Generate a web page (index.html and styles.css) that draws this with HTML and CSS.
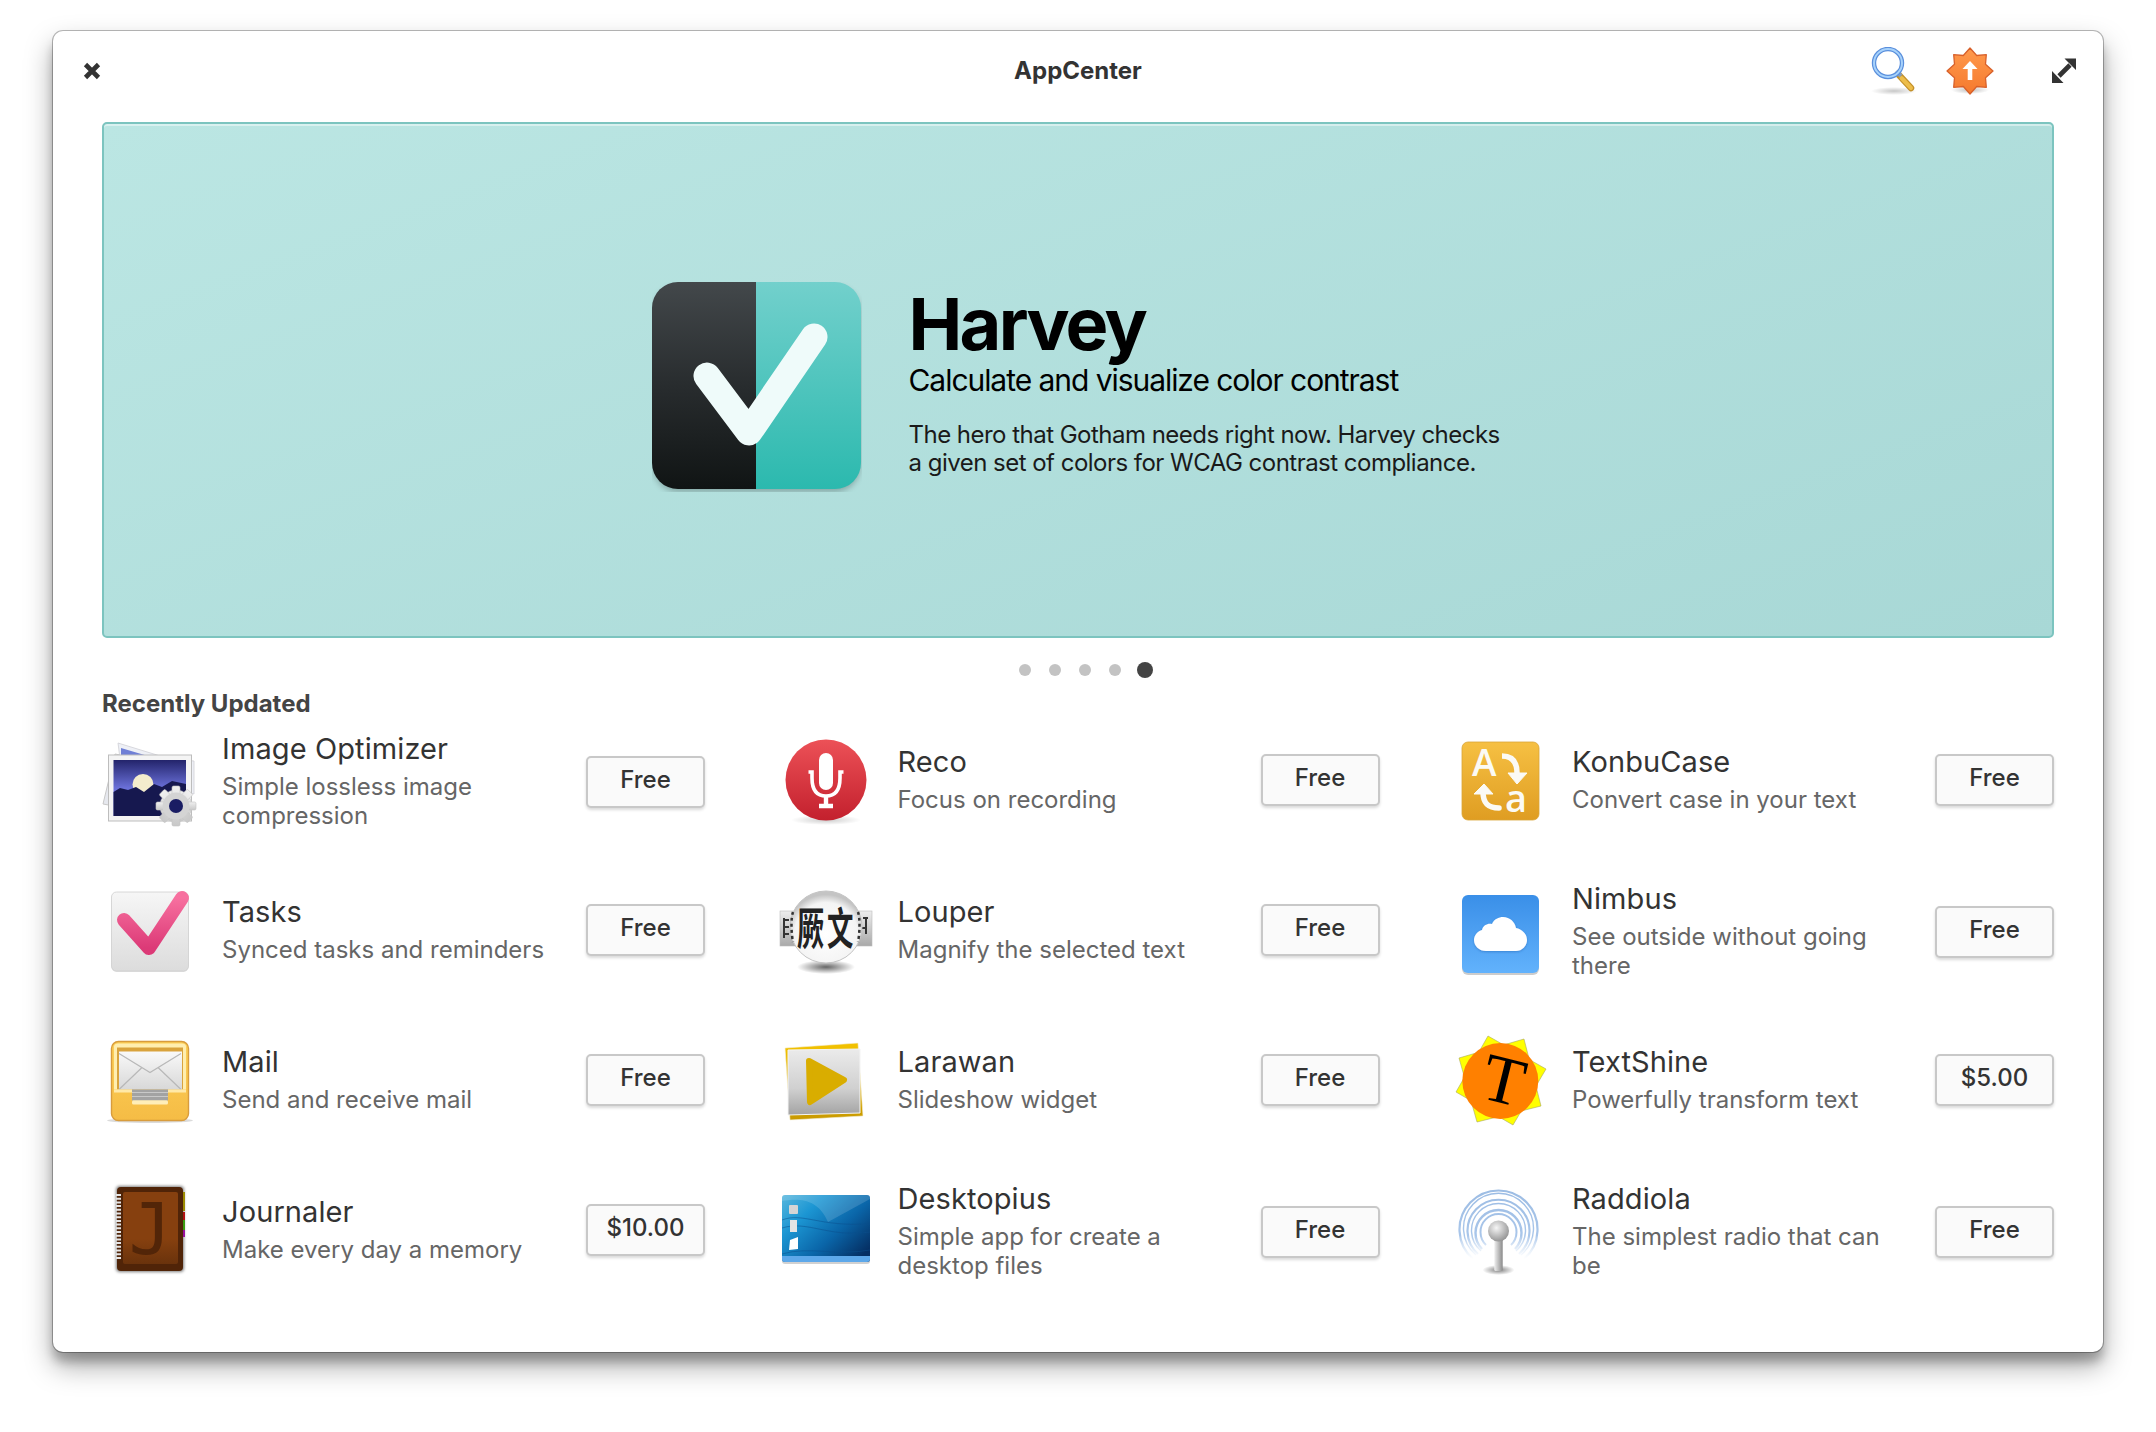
FILE: index.html
```html
<!DOCTYPE html>
<html lang="en">
<head>
<meta charset="utf-8">
<title>AppCenter</title>
<link rel="stylesheet" href="styles.css">
</head>
<body>
<main class="window">
  <header class="titlebar">
    <div class="tb-left">
      <svg class="ic-close" width="18" height="18" viewBox="0 0 18 18"><path d="M2.500 2.500L15.500 15.500M15.500 2.500L2.500 15.500" stroke="#333" stroke-width="4.600" fill="none"/></svg>
    </div>
    <h1 class="title">AppCenter</h1>
    <div class="tb-right">
      <svg class="ic-search" width="48" height="48" viewBox="0 0 48 48">
        <defs><radialGradient id="ss"><stop offset="0" stop-color="#000" stop-opacity=".22"/><stop offset="1" stop-color="#000" stop-opacity="0"/></radialGradient></defs>
        <ellipse cx="24" cy="44" rx="23" ry="4" fill="url(#ss)"/>
        <path d="M28 27L41 41" stroke="#c4912a" stroke-width="6.500" stroke-linecap="round"/>
        <path d="M31.500 31L41 41" stroke="#edbd4a" stroke-width="4" stroke-linecap="round"/>
        <path d="M26 24L31 29" stroke="#8a9db5" stroke-width="4"/>
        <circle cx="18" cy="16" r="14" fill="#fff" fill-opacity=".5" stroke="#5a8fdc" stroke-width="4.400"/>
        <circle cx="18" cy="16" r="14" fill="none" stroke="#a7d2fb" stroke-width="2"/>
      </svg>
      <svg class="ic-update" width="48" height="48" viewBox="0 0 48 48">
        <defs><linearGradient id="ug" x1="0" y1="0" x2="0" y2="1"><stop offset="0" stop-color="#ff9a4d"/><stop offset="1" stop-color="#f5792e"/></linearGradient>
        <radialGradient id="us"><stop offset="0" stop-color="#000" stop-opacity=".25"/><stop offset="1" stop-color="#000" stop-opacity="0"/></radialGradient></defs>
        <ellipse cx="24" cy="43" rx="19" ry="4" fill="url(#us)"/>
        <path d="M24 1L30.700 8.500L40.300 7.700L39.500 17.300L47 24L39.500 30.700L40.300 40.300L30.700 39.500L24 47L17.300 39.500L7.700 40.300L8.500 30.700L1 24L8.500 17.300L7.700 7.700L17.300 8.500Z" fill="url(#ug)" stroke="#d8602a" stroke-width="1.300" stroke-linejoin="round"/>
        <path d="M24 14L31.500 22H26.300V33H21.700V22H16.500Z" fill="#fff"/>
      </svg>
      <svg class="ic-expand" width="24" height="25" viewBox="0 0 24 25">
        <path d="M7 18L18 7" stroke="#333" stroke-width="4.600"/>
        <path d="M12.500 0.500H24V12Z M0 13V25H11.500Z" fill="#333"/>
      </svg>
    </div>
  </header>

  <section class="hero">
    <svg class="hero-icon" width="210" height="210" viewBox="0 0 210 210">
      <defs>
        <linearGradient id="hd" x1="0" y1="0" x2="0" y2="1"><stop offset="0" stop-color="#43484b"/><stop offset=".5" stop-color="#282c2e"/><stop offset="1" stop-color="#101414"/></linearGradient>
        <linearGradient id="ht" x1="0" y1="0" x2="0" y2="1"><stop offset="0" stop-color="#72d0cc"/><stop offset="1" stop-color="#2bb9ae"/></linearGradient>
        <clipPath id="hc"><rect x="0" y="0" width="209" height="207" rx="26"/></clipPath>
        <filter id="hb" x="-20%" y="-20%" width="140%" height="140%"><feGaussianBlur stdDeviation="3"/></filter>
      </defs>
      <rect x="1" y="4" width="207" height="206" rx="26" fill="#000" opacity=".25" filter="url(#hb)"/>
      <g clip-path="url(#hc)">
        <rect x="0" y="0" width="104" height="208" fill="url(#hd)"/>
        <rect x="104" y="0" width="106" height="208" fill="url(#ht)"/>
      </g>
      <path d="M55 94L97 150L162 55" fill="none" stroke="#effbfa" stroke-width="27" stroke-linecap="round" stroke-linejoin="round"/>
    </svg>
    <div class="hero-text">
      <h2 class="hero-name">Harvey</h2>
      <p class="hero-sub">Calculate and visualize color contrast</p>
      <p class="hero-desc">The hero that Gotham needs right now. Harvey checks a given set of colors for WCAG contrast compliance.</p>
    </div>
  </section>

  <div class="dots"><span class="dot"></span><span class="dot"></span><span class="dot"></span><span class="dot"></span><span class="dot dot-on"></span></div>

  <h3 class="section-title">Recently Updated</h3>

  <div class="grid">
    <article class="app">
      <svg class="icon" viewBox="0 0 96 96">
        <defs>
          <linearGradient id="io" x1="0" y1="0" x2="0" y2="1"><stop offset="0" stop-color="#23246b"/><stop offset=".5" stop-color="#6a70d8"/><stop offset="1" stop-color="#8186e0"/></linearGradient>
          <linearGradient id="iog" x1="0" y1="0" x2="0" y2="1"><stop offset="0" stop-color="#f0f0f0"/><stop offset="1" stop-color="#c8c8c8"/></linearGradient>
        </defs>
        <path d="M1 70L13 20L88 34L78 84Z" fill="#e6e8ee" stroke="#c8c8c8"/>
        <path d="M16 9L68 25L92 27L92 60L20 40Z" fill="#eef0f6" stroke="#cfcfd6" stroke-width=".8"/>
        <path d="M19 14L56 25H19Z" fill="#6f7fd6"/>
        <rect x="6.500" y="21" width="83" height="66" fill="#f4f4f4" stroke="#bdbdbd"/>
        <rect x="11.500" y="26" width="72.500" height="56" fill="url(#io)"/>
        <circle cx="41" cy="50.500" r="10.500" fill="#f4eccd"/>
        <path d="M11.500 58L18 54L26 56L34 53L42 58L52 50L60 53L70 47L84 50V82H11.500Z" fill="#16184f"/>
        <g fill="url(#iog)" stroke="#c4c4c4" stroke-width=".6">
          <circle cx="74" cy="72" r="16"/>
          <rect x="70" y="52" width="8" height="40" rx="1.500"/>
          <rect x="54" y="68" width="40" height="8" rx="1.500"/>
          <rect x="70" y="52" width="8" height="40" rx="1.500" transform="rotate(45 74 72)"/>
          <rect x="70" y="52" width="8" height="40" rx="1.500" transform="rotate(-45 74 72)"/>
        </g>
        <circle cx="74" cy="72" r="13.500" fill="#d4d4d4"/>
        <circle cx="74" cy="72" r="7" fill="#1a1d63"/>
      </svg>
      <div class="info"><h4 class="name">Image Optimizer</h4><p class="summary">Simple lossless image compression</p></div>
      <button class="price">Free</button>
    </article>

    <article class="app">
      <svg class="icon" viewBox="0 0 96 96">
        <defs>
          <linearGradient id="re" x1="0" y1="0" x2="0" y2="1"><stop offset="0" stop-color="#ec5157"/><stop offset="1" stop-color="#c3202d"/></linearGradient>
          <radialGradient id="res"><stop offset="0" stop-color="#000" stop-opacity=".2"/><stop offset="1" stop-color="#000" stop-opacity="0"/></radialGradient>
        </defs>
        <ellipse cx="48" cy="88" rx="35" ry="5" fill="url(#res)"/>
        <circle cx="48" cy="48" r="40.500" fill="url(#re)"/>
        <rect x="41" y="21" width="14" height="37" rx="7" fill="#fff"/>
        <path d="M30.500 40H34V46C34 61 41 64 48 64C55 64 62 61 62 46V40H65.500" fill="none" stroke="#fff" stroke-width="3.600"/>
        <path d="M48 63V73M41 74H55" stroke="#fff" stroke-width="4.400" fill="none"/>
      </svg>
      <div class="info"><h4 class="name">Reco</h4><p class="summary">Focus on recording</p></div>
      <button class="price">Free</button>
    </article>

    <article class="app">
      <svg class="icon" viewBox="0 0 96 96">
        <defs><linearGradient id="ko" x1="0" y1="0" x2="0" y2="1"><stop offset="0" stop-color="#f6c043"/><stop offset="1" stop-color="#df9d22"/></linearGradient></defs>
        <rect x="10" y="10" width="77" height="78" rx="6" fill="url(#ko)" stroke="#d9a437" stroke-width=".8"/>
        <text x="20" y="44" class="ic-letter" font-size="37">A</text>
        <text x="53" y="80" class="ic-letter" font-size="38">a</text>
        <path d="M50 24C60 24 65 30 65 41" fill="none" stroke="#fbfaf5" stroke-width="5.500"/>
        <path d="M56 41H75L65 52Z" fill="#fbfaf5" stroke="#fbfaf5" stroke-linejoin="round"/>
        <path d="M47 76C37 76 31 72 31 60" fill="none" stroke="#fbfaf5" stroke-width="5.500" stroke-linecap="round"/>
        <path d="M22 62L32 52L41 62Z" fill="#fbfaf5" stroke="#fbfaf5" stroke-linejoin="round"/>
      </svg>
      <div class="info"><h4 class="name">KonbuCase</h4><p class="summary">Convert case in your text</p></div>
      <button class="price">Free</button>
    </article>

    <article class="app">
      <svg class="icon" viewBox="0 2 96 96">
        <defs><linearGradient id="ta" x1="0" y1="0" x2="0" y2="1"><stop offset="0" stop-color="#f6f6f6"/><stop offset="1" stop-color="#dcdcdc"/></linearGradient>
        <linearGradient id="tp" x1="0" y1="0" x2="0" y2="1"><stop offset="0" stop-color="#f7709f"/><stop offset="1" stop-color="#dc3a77"/></linearGradient></defs>
        <rect x="9.500" y="15" width="77" height="77" rx="5" fill="#000" opacity=".12"/>
        <rect x="9.500" y="12" width="77" height="79" rx="5" fill="url(#ta)" stroke="#cfcfcf" stroke-width=".8"/>
        <path d="M22 40L47 68L80 18" fill="none" stroke="url(#tp)" stroke-width="14" stroke-linecap="round" stroke-linejoin="round"/>
      </svg>
      <div class="info"><h4 class="name">Tasks</h4><p class="summary">Synced tasks and reminders</p></div>
      <button class="price">Free</button>
    </article>

    <article class="app">
      <svg class="icon" viewBox="0 0 96 96">
        <defs>
          <linearGradient id="ls" x1="0" y1="0" x2="0" y2="1"><stop offset="0" stop-color="#ededed"/><stop offset="1" stop-color="#a9a9a9"/></linearGradient>
          <radialGradient id="lb" cx=".5" cy=".6" r=".55"><stop offset="0" stop-color="#fff"/><stop offset=".8" stop-color="#f4f4f4"/><stop offset="1" stop-color="#c4c4c4"/></radialGradient>
          <radialGradient id="lsh"><stop offset="0" stop-color="#000" stop-opacity=".6"/><stop offset="1" stop-color="#000" stop-opacity="0"/></radialGradient>
        </defs>
        <ellipse cx="48" cy="85" rx="29" ry="7" fill="url(#lsh)"/>
        <rect x="2" y="29" width="92" height="35" fill="url(#ls)" stroke="#bdbdbd" stroke-width=".6"/>
        <path d="M5 38h6M5 45h6M5 52h6M6 36v20M85 36h5M84 46h5M88 36v16" stroke="#333" stroke-width="2" fill="none"/>
        <circle cx="48" cy="45" r="36" fill="url(#lb)" stroke="#c4c4c4"/>
        <text class="ic-cjk" font-size="44" transform="translate(19 63) scale(.62 1)">厥</text>
        <text class="ic-cjk" font-size="44" transform="translate(49 63) scale(.6 1)">文</text>
        <path d="M15 30c-2 5-2 20 0 30M80 30c2 5 2 20 0 30" stroke="#333" stroke-width="2.500" stroke-dasharray="3 3" fill="none"/>
      </svg>
      <div class="info"><h4 class="name">Louper</h4><p class="summary">Magnify the selected text</p></div>
      <button class="price">Free</button>
    </article>

    <article class="app">
      <svg class="icon" viewBox="0 0 96 96">
        <defs>
          <linearGradient id="ni" x1="0" y1="0" x2="0" y2="1"><stop offset="0" stop-color="#3a8fe8"/><stop offset="1" stop-color="#62b2fc"/></linearGradient>
          <filter id="nib" x="-10%" y="-10%" width="120%" height="130%"><feDropShadow dx="0" dy="1" stdDeviation="1" flood-color="#1a5fb0" flood-opacity=".5"/></filter>
        </defs>
        <rect x="10" y="13" width="77" height="78" rx="6" fill="#000" opacity=".2"/>
        <rect x="10" y="11" width="77" height="78" rx="6" fill="url(#ni)"/>
        <path d="M34 67C27 67 22 62 22 56C22 51 26 47 30 46C31 41 36 39 40 40C42 35 47 33 51 33C58 33 63 38 64 44C70 45 75 50 75 56C75 62 70 67 64 67Z" fill="#fff" filter="url(#nib)"/>
      </svg>
      <div class="info"><h4 class="name">Nimbus</h4><p class="summary">See outside without going there</p></div>
      <button class="price">Free</button>
    </article>

    <article class="app">
      <svg class="icon" viewBox="0 1.500 96 96">
        <defs>
          <linearGradient id="mt" x1="0" y1="0" x2="0" y2="1"><stop offset="0" stop-color="#f9f9f9"/><stop offset="1" stop-color="#d8d8d8"/></linearGradient>
          <linearGradient id="mb" x1="0" y1="0" x2="0" y2="1"><stop offset="0" stop-color="#fdd15a"/><stop offset="1" stop-color="#f5bc45"/></linearGradient>
        </defs>
        <ellipse cx="48" cy="90" rx="43" ry="2.500" fill="#000" opacity=".14"/>
        <rect x="9.500" y="11" width="77" height="79" rx="7" fill="url(#mb)" stroke="#d89c3d" stroke-width="1.400"/>
        <path d="M12 16C12 14 14 13 16 13H80C82 13 84 14 84 16V59H12Z" fill="#ffeeb0"/>
        <rect x="15" y="17" width="66" height="42" fill="#d9a33d"/>
        <rect x="17" y="21" width="63" height="38" fill="url(#mt)"/>
        <path d="M17 23L48 42L79 23M17 59L40 37M79 59L56 37" fill="none" stroke="#b8b8b8" stroke-width="1.200"/>
        <path d="M12 59H30V68C30 71 32 72 34 72H62C64 72 66 71 66 68V59H84V62H12Z" fill="#ffe9a8"/>
        <rect x="30" y="59" width="36" height="11" fill="#a3a3a3"/>
        <path d="M30 62H66M30 66H66" stroke="#c9c9c9" stroke-width="1"/>
        <rect x="30" y="70" width="36" height="4" rx="1.500" fill="#ffeeb8"/>
      </svg>
      <div class="info"><h4 class="name">Mail</h4><p class="summary">Send and receive mail</p></div>
      <button class="price">Free</button>
    </article>

    <article class="app">
      <svg class="icon" viewBox="0 0 96 96">
        <defs><linearGradient id="lag" x1="0" y1="0" x2="0" y2="1"><stop offset="0" stop-color="#ebebeb"/><stop offset=".6" stop-color="#d0d0d0"/><stop offset="1" stop-color="#a3a3a3"/></linearGradient>
        <linearGradient id="lay" x1="0" y1="0" x2="0" y2="1"><stop offset="0" stop-color="#f3c200"/><stop offset="1" stop-color="#c99a00"/></linearGradient></defs>
        <path d="M7 16L80 11L85 84L12 88Z" fill="url(#lay)" stroke="#f5f0d8" stroke-width=".6" stroke-linejoin="round"/>
        <path d="M10 18L82 17L82 81L10 83Z" fill="url(#lag)" stroke="#f4f4f4" stroke-width="1"/>
        <path d="M31 29L66 48L32 70Z" fill="#d9ad00" stroke="#d9ad00" stroke-width="6" stroke-linejoin="round"/>
      </svg>
      <div class="info"><h4 class="name">Larawan</h4><p class="summary">Slideshow widget</p></div>
      <button class="price">Free</button>
    </article>

    <article class="app">
      <svg class="icon" viewBox="0 0 96 96">
        <path d="M36 4L94 37L61 93L4 60Z" fill="#ffff00" stroke="#a8a860" stroke-width=".6"/>
        <path d="M72 7L89 74L25 90L7 26Z" fill="#ffff00" stroke="#a8a860" stroke-width=".6"/>
        <circle cx="48.300" cy="49" r="38" fill="#ff8000"/>
        <text x="52" y="71" class="ic-serif" font-size="68" transform="rotate(14 52 48)">T</text>
      </svg>
      <div class="info"><h4 class="name">TextShine</h4><p class="summary">Powerfully transform text</p></div>
      <button class="price">$5.00</button>
    </article>

    <article class="app">
      <svg class="icon" viewBox="0 2 96 96">
        <defs><linearGradient id="jo" x1="0" y1="0" x2="0" y2="1"><stop offset="0" stop-color="#86400f"/><stop offset=".65" stop-color="#86400f"/><stop offset="1" stop-color="#6a330c"/></linearGradient>
        <filter id="jb" x="-15%" y="-15%" width="130%" height="130%"><feGaussianBlur stdDeviation="1.500"/></filter></defs>
        <rect x="14" y="6" width="68" height="86" rx="4" fill="#000" opacity=".5" filter="url(#jb)"/>
        <rect x="15" y="7" width="66" height="84" rx="4" fill="#502408"/>
        <rect x="21" y="12" width="55" height="72" rx="2" fill="url(#jo)"/>
        <text x="48" y="74" class="ic-j" font-size="71">J</text>
        <path d="M16.500 14V80" stroke="#e6e6e6" stroke-width="5" stroke-dasharray="2 1.700" fill="none"/>
        <rect x="81" y="12" width="2" height="19" fill="#9c8a00"/>
        <rect x="81" y="32" width="2" height="8" fill="#b11010"/>
        <rect x="81" y="40" width="2" height="10" fill="#3a9a10"/>
        <rect x="81" y="50" width="2" height="7" fill="#98109c"/>
      </svg>
      <div class="info"><h4 class="name">Journaler</h4><p class="summary">Make every day a memory</p></div>
      <button class="price">$10.00</button>
    </article>

    <article class="app">
      <svg class="icon" viewBox="0 2 96 96">
        <defs>
          <linearGradient id="de" x1="0" y1="0" x2="1" y2=".8"><stop offset="0" stop-color="#58b7dd"/><stop offset=".3" stop-color="#1c96d3"/><stop offset=".65" stop-color="#0a65a8"/><stop offset="1" stop-color="#052f63"/></linearGradient>
          <clipPath id="dc"><rect x="4" y="13" width="88" height="67" rx="3"/></clipPath>
        </defs>
        <rect x="4" y="15" width="88" height="67" rx="3" fill="#000" opacity=".18"/>
        <g clip-path="url(#dc)">
          <rect x="4" y="13" width="88" height="67" fill="url(#de)"/>
          <path d="M50 40L92 17V13H4V19C20 16 40 16 50 40Z" fill="#fff" opacity=".14"/>
          <path d="M4 38C25 30 40 45 92 42M4 46C30 38 50 56 92 50M4 72C30 64 60 74 92 68" fill="none" stroke="#0b4f8e" stroke-opacity=".5" stroke-width="1"/>
          <rect x="4" y="74" width="88" height="6" fill="#5da8ea"/>
        </g>
        <rect x="11" y="23" width="9" height="9" rx="1" fill="#d5d5d5"/>
        <rect x="12" y="38" width="7" height="12" fill="#e4e4e4"/>
        <path d="M12 58L20 55V67L11 68Z" fill="#fff"/>
      </svg>
      <div class="info"><h4 class="name">Desktopius</h4><p class="summary">Simple app for create a desktop files</p></div>
      <button class="price">Free</button>
    </article>

    <article class="app">
      <svg class="icon" viewBox="0 0 96 96">
        <defs>
          <linearGradient id="ra" gradientUnits="userSpaceOnUse" x1="0" y1="8" x2="0" y2="75"><stop offset="0" stop-color="#9dbde4"/><stop offset=".65" stop-color="#a9c6ea"/><stop offset="1" stop-color="#cfe0f4" stop-opacity="0"/></linearGradient>
          <linearGradient id="rs" x1="0" y1="0" x2="1" y2="0"><stop offset="0" stop-color="#f0f0f0"/><stop offset=".5" stop-color="#bdbdbd"/><stop offset="1" stop-color="#8a8a8a"/></linearGradient>
          <radialGradient id="rb" cx=".4" cy=".35" r=".7"><stop offset="0" stop-color="#f6f6f6"/><stop offset="1" stop-color="#8f8f8f"/></radialGradient>
          <radialGradient id="rsh"><stop offset="0" stop-color="#000" stop-opacity=".5"/><stop offset="1" stop-color="#000" stop-opacity="0"/></radialGradient>
        </defs>
        <g fill="none" stroke="url(#ra)">
          <path d="M21 75A39 39 0 1 1 72 75" stroke-width="2.200"/>
          <path d="M24 71A35 35 0 1 1 69 71" stroke-width="1.400"/>
          <path d="M26 70A31 31 0 1 1 67 70" stroke-width="2.200"/>
          <path d="M29 67A27 27 0 1 1 64 67" stroke-width="1.400"/>
          <path d="M30 65A23 23 0 1 1 63 65" stroke-width="2.400"/>
          <path d="M34 61A18 18 0 1 1 59 61" stroke-width="2"/>
        </g>
        <ellipse cx="46.500" cy="86" rx="16" ry="5" fill="url(#rsh)"/>
        <rect x="42.300" y="50" width="8.400" height="37" rx="1.500" fill="url(#rs)"/>
        <circle cx="46.500" cy="47" r="10.500" fill="url(#rb)"/>
      </svg>
      <div class="info"><h4 class="name">Raddiola</h4><p class="summary">The simplest radio that can be</p></div>
      <button class="price">Free</button>
    </article>
  </div>
</main>
</body>
</html>
```
FILE: styles.css
```css
* { box-sizing: border-box; }
html, body { margin: 0; padding: 0; background: #fff; }
body { font-family: "Inter", "Liberation Sans", sans-serif; color: #333; height: 1432px; overflow: hidden; padding-top: 31px; }

.window {
  width: 2050px;
  height: 1321px;
  margin-left: 53px;
  padding: 0 49px;
  background: #fff;
  border-radius: 10px;
  box-shadow: 0 0 0 1px rgba(0,0,0,.27), 0 14px 28px rgba(0,0,0,.35), 0 10px 10px rgba(0,0,0,.22);
  display: flex;
  flex-direction: column;
}

.titlebar { height: 91px; display: grid; grid-template-columns: 1fr auto 1fr; align-items: center; }
.tb-left { display: flex; align-items: center; margin-left: -19px; margin-top: -12px; }
.title { margin: -12px 0 0; font-size: 24px; font-weight: 700; color: #333; line-height: 30px; }
.tb-right { display: flex; justify-content: flex-end; align-items: center; margin-top: -12px; margin-right: -22px; }
.ic-search { margin-right: 28px; }
.ic-update { margin-right: 58px; }

.hero {
  height: 516px;
  border: 2px solid #7cc4bf;
  border-radius: 5px;
  background: linear-gradient(160deg, #bbe6e3 0%, #a8d8d6 100%);
  box-shadow: inset 0 2px 0 rgba(255,255,255,.45);
  display: flex;
  align-items: center;
  justify-content: center;
  gap: 47px;
  padding-top: 13px;
}
.hero-icon { flex: none; }
.hero-text { width: 596px; color: #000; margin-top: -12px; }
.hero-name { margin: 0; font-size: 72px; line-height: 80px; font-weight: 700; letter-spacing: -2.700px; }
.hero-sub { margin: -4px 0 0; font-size: 30px; line-height: 40px; letter-spacing: -1.050px; }
.hero-desc { margin: 21px 0 0; font-size: 24px; line-height: 28px; letter-spacing: -.52px; color: #1a1a1a; }

.dots { display: flex; justify-content: center; align-items: center; gap: 18px; height: 16px; margin-top: 24px; padding-left: 14px; }
.dot { width: 12px; height: 12px; border-radius: 50%; background: #c3c3c3; }
.dot-on { width: 16px; height: 16px; background: #444; margin-left: -2px; margin-right: -2px; }

.section-title { margin: 11px 0 0; font-size: 24px; line-height: 30px; font-weight: 700; color: #444; }

.grid { display: grid; grid-template-columns: 603px 602px 602px; grid-auto-rows: 100px; column-gap: 72.5px; row-gap: 50px; margin-top: 13px; align-items: start; }
.app { display: flex; align-items: center; gap: 24px; }
.icon { width: 96px; height: 96px; flex: none; }
.info { flex: 1; min-width: 0; padding-bottom: 2px; }
.name { margin: 0 0 7px; font-size: 29px; line-height: 33px; font-weight: 400; letter-spacing: .1px; color: #333; }
.summary { margin: 0; font-size: 24px; line-height: 29px; color: #666; }
.price {
  flex: none;
  width: 119px;
  height: 52px;
  margin-left: 10px;
  font: 500 24px/1 "Inter", "Liberation Sans", sans-serif;
  color: #333;
  background: #fafafa;
  border: 2px solid #c8c8c8;
  border-radius: 5px;
  box-shadow: 0 2px 3px rgba(0,0,0,.15);
  padding: 0 0 4px;
}

.ic-letter { font-family: "Open Sans", "Liberation Sans", sans-serif; font-weight: 600; fill: #fbfaf5; }
.ic-cjk { font-family: "Noto Sans CJK SC", sans-serif; font-weight: 700; fill: #222; }
.ic-serif { font-family: "Liberation Serif", serif; fill: #000; text-anchor: middle; }
.ic-j { font-family: "DejaVu Sans Mono", monospace; font-weight: 400; fill: #522508; text-anchor: middle; }
```
